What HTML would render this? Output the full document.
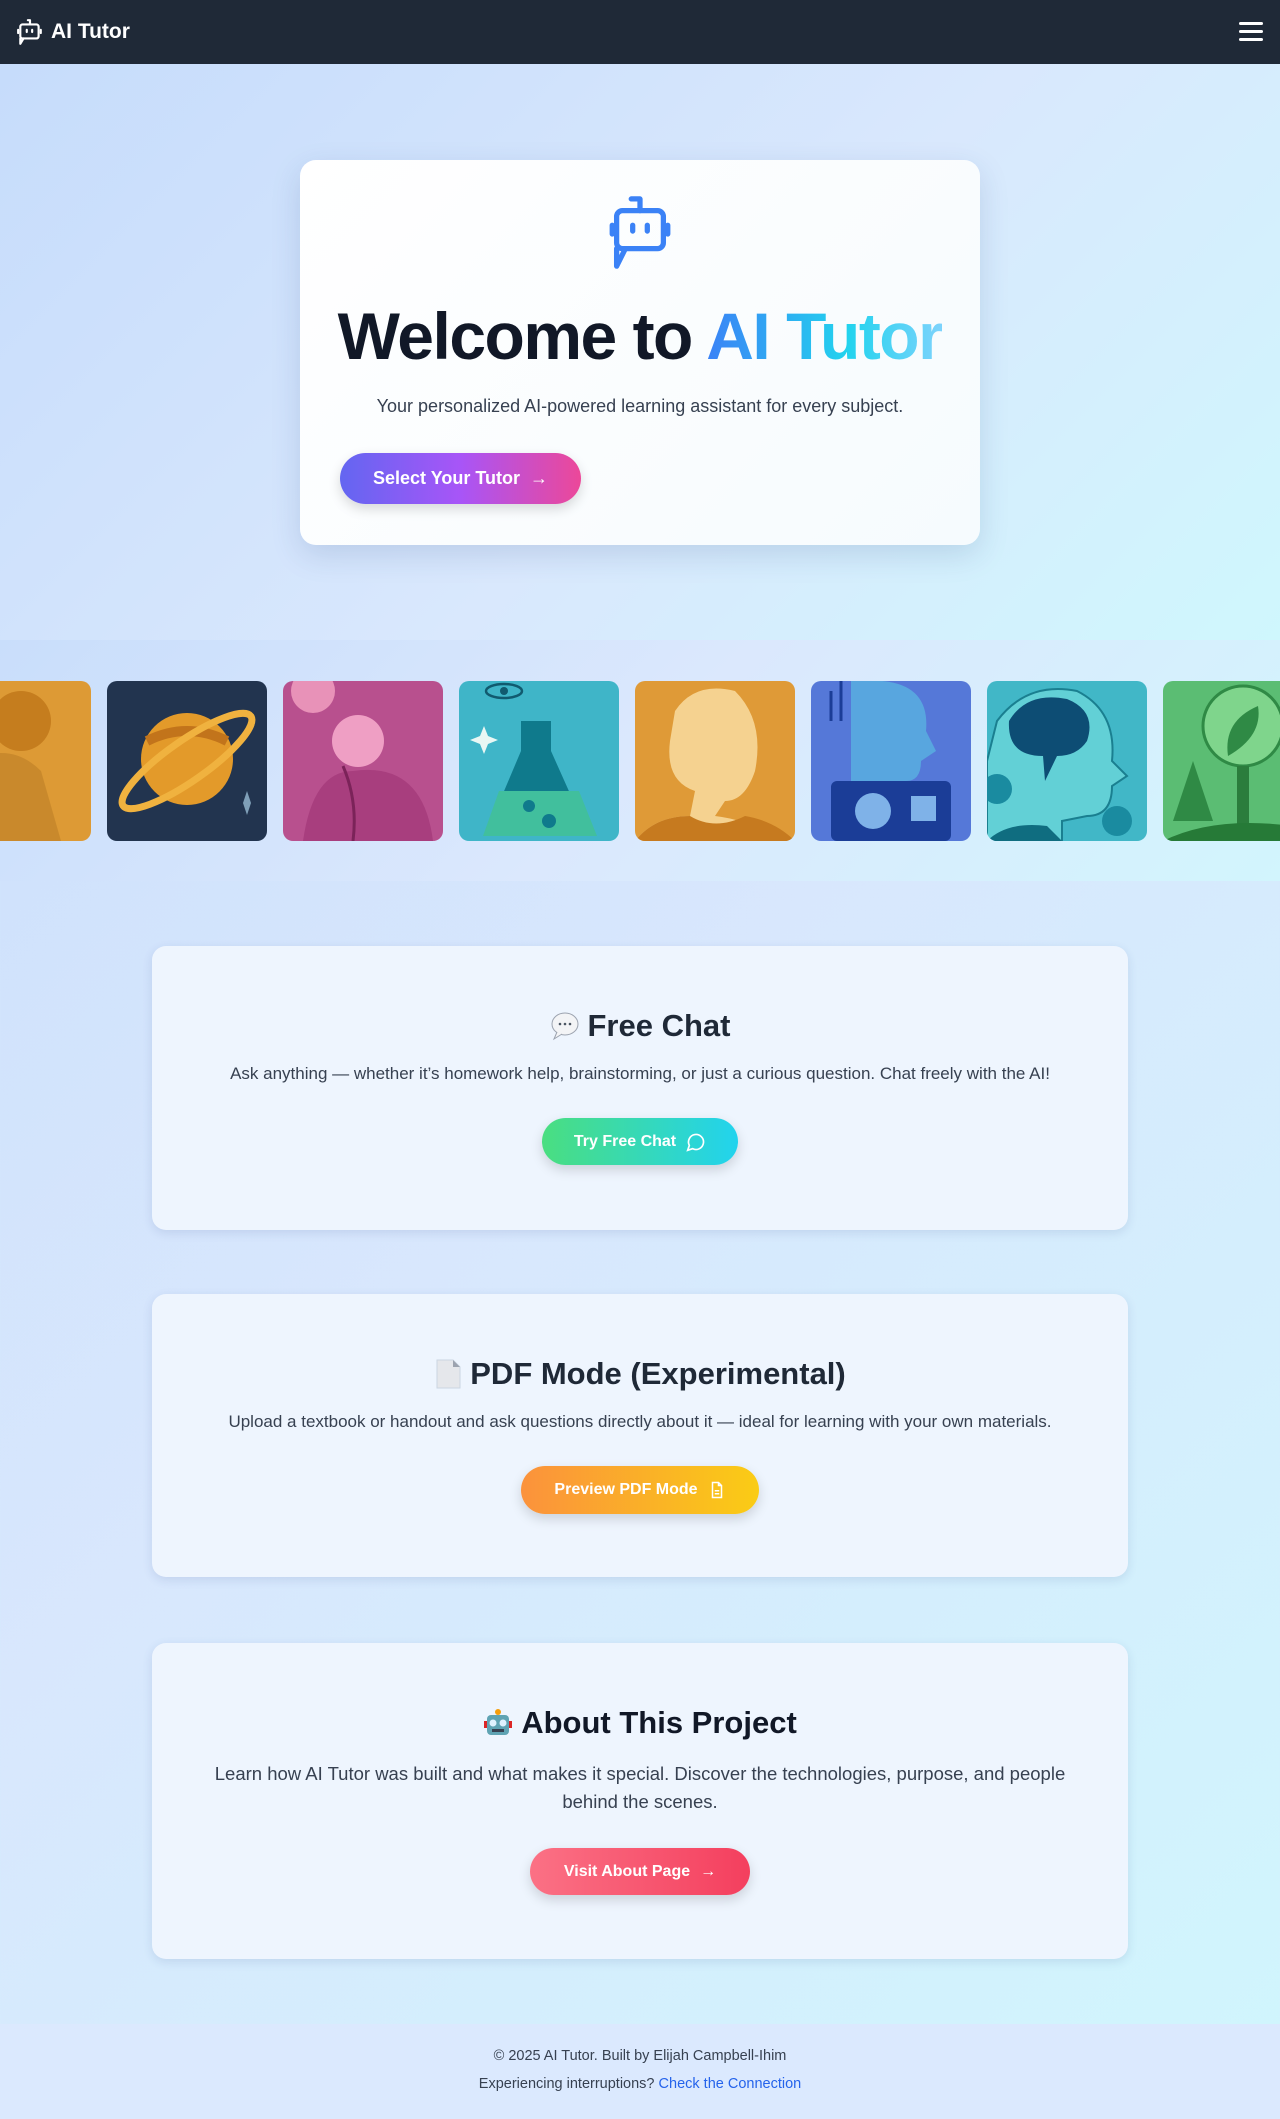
<!DOCTYPE html>
<html><head><meta charset="utf-8"><style>
*{box-sizing:border-box;margin:0;padding:0}
body{width:1280px;height:2119px;font-family:"Liberation Sans",sans-serif;background:linear-gradient(135deg,#c7ddfb,#d8e7fd 50%,#d0f6fd);position:relative;overflow:hidden;color:#1f2937}
nav{position:absolute;top:0;left:0;width:1280px;height:64px;background:#1f2937;box-shadow:0 2px 6px rgba(0,0,0,.2)}
nav .logo{position:absolute;left:17px;top:18px;display:flex;align-items:center;gap:8px;color:#fff;font-weight:700;font-size:21px}
nav .burger{position:absolute;right:17px;top:22px;width:24px}
nav .burger i{display:block;height:3px;background:#fff;margin-bottom:5px;border-radius:2px}
.hero{position:absolute;top:64px;left:0;width:1280px;height:576px;background:linear-gradient(135deg,#c6dcfb,#d9e8fd 55%,#cff7fd)}
.card{position:absolute;left:300px;top:96px;width:680px;height:385px;background:linear-gradient(135deg,#fff,#f6fbfe);border-radius:16px;box-shadow:0 10px 30px rgba(30,60,120,.15)}
.card h1{position:absolute;left:0;width:100%;top:138px;text-align:center;font-size:66px;font-weight:800;color:#111827;letter-spacing:-1.5px}
.card h1 span{background:linear-gradient(90deg,#3b82f6,#22d3ee 60%,#7dd3fc);-webkit-background-clip:text;color:transparent}
.card p{position:absolute;top:236px;width:100%;text-align:center;font-size:18px;color:#374151}
.btn{position:absolute;display:flex;align-items:center;justify-content:center;gap:10px;color:#fff;font-weight:700;border-radius:30px;box-shadow:0 5px 12px rgba(0,0,0,.15)}
.strip{position:absolute;top:640px;left:0;width:1280px;height:241px;background:linear-gradient(135deg,#c9defb,#dbe8fd 50%,#d2f5fd)}
.tile{position:absolute;top:41px;width:160px;height:160px;border-radius:10px;overflow:hidden}
.sec{position:absolute;left:152px;width:976px;background:#eef5fe;border-radius:14px;box-shadow:0 3px 10px rgba(30,60,120,.12);text-align:center}
.sec h2{position:absolute;width:100%;font-size:31px;font-weight:700;color:#1f2937;display:flex;justify-content:center;align-items:center;gap:8px}
.sec p{position:absolute;width:100%;font-size:17px;color:#374151}
footer{position:absolute;top:2024px;left:0;width:1280px;height:95px;background:#dbe9fe;text-align:center;font-size:14.5px;color:#374151}
</style></head><body>
<nav><div class="logo"><svg width="26" height="28" viewBox="0 0 24 26" fill="none" stroke="#fff" stroke-width="2" stroke-linecap="round" stroke-linejoin="round"><path d="M10 2h2v4"/><rect x="3" y="6" width="17" height="13" rx="2"/><path d="M3 19v5l3-5"/><path d="M1 11v3M22 11v3M9 11v2M14 11v2"/></svg>AI Tutor</div><div class="burger"><i></i><i></i><i></i></div></nav>
<div class="hero"><div class="card">
<svg style="position:absolute;left:302px;top:36px" width="76" height="76" viewBox="0 0 24 26" fill="none" stroke="#3b82f6" stroke-width="1.8" stroke-linecap="round" stroke-linejoin="round"><path d="M9 1h3v4"/><rect x="4" y="5" width="16" height="13" rx="2"/><path d="M4 18v6l3-6"/><path d="M2.5 10v3M21.5 10v3M9.5 10v2M14.5 10v2"/></svg>
<h1>Welcome to <span>AI Tutor</span></h1>
<p>Your personalized AI-powered learning assistant for every subject.</p>
<div class="btn" style="left:40px;top:293px;width:241px;height:51px;font-size:18px;background:linear-gradient(90deg,#6366f1,#a855f7 50%,#ec4899)">Select Your Tutor <span style="font-weight:400">→</span></div>
</div></div>
<div class="strip">
<div class="tile" style="left:-69px;background:#dd9a35"><svg width="160" height="160"><circle cx="90" cy="40" r="30" fill="#c57d1e"/><path d="M20 160 L40 80 Q80 60 110 90 L130 160Z" fill="#c9892c"/></svg></div>
<div class="tile" style="left:107px;background:#22344f"><svg width="160" height="160"><circle cx="80" cy="78" r="46" fill="#e39a2a"/><path d="M40 60 Q80 40 120 60" stroke="#c2741b" stroke-width="10" fill="none"/><ellipse cx="80" cy="80" rx="78" ry="20" transform="rotate(-35 80 80)" fill="none" stroke="#f0b23f" stroke-width="7"/><path d="M140 110 l4 12 l-4 12 l-4 -12z" fill="#7f9fb8"/></svg></div>
<div class="tile" style="left:283px;background:#b8508e"><svg width="160" height="160"><circle cx="30" cy="10" r="22" fill="#e892b8"/><circle cx="75" cy="60" r="26" fill="#ef9fc4"/><path d="M20 160 Q30 90 70 90 Q140 80 150 160Z" fill="#a83e7e"/><path d="M60 85 Q75 120 70 160" stroke="#7b2359" stroke-width="3" fill="none"/></svg></div>
<div class="tile" style="left:459px;background:#3fb5c8"><svg width="160" height="160"><path d="M62 40h30v30l38 85H26l36-85z" fill="#0f7a8c"/><path d="M40 110h80l18 45H24z" fill="#41bf9d"/><circle cx="70" cy="125" r="6" fill="#0f7a8c"/><circle cx="90" cy="140" r="7" fill="#0f7a8c"/><path d="M25 45 l4 10 l10 4 l-10 4 l-4 10 l-4 -10 l-10 -4 l10 -4z" fill="#e8f7f4"/><ellipse cx="45" cy="10" rx="18" ry="7" fill="none" stroke="#115a6f" stroke-width="2.5"/><circle cx="45" cy="10" r="4" fill="#115a6f"/></svg></div>
<div class="tile" style="left:635px;background:#df9a37"><svg width="160" height="160"><path d="M40 30 Q60 0 100 10 Q130 40 120 90 Q110 120 90 120 L80 135 Q120 140 140 160 H0 Q20 135 55 135 L60 110 Q30 100 35 60z" fill="#f5d290"/><path d="M0 160 Q20 135 55 135 Q80 150 110 135 Q140 140 160 160z" fill="#c67a1f"/></svg></div>
<div class="tile" style="left:811px;background:#5578d8"><svg width="160" height="160"><path d="M50 0 Q120 -5 115 50 L125 70 L110 80 Q110 100 95 100 V120 H40 V0z" fill="#58a6df"/><rect x="20" y="100" width="120" height="60" rx="6" fill="#1b3d97"/><circle cx="62" cy="130" r="18" fill="#7fb2e8"/><rect x="100" y="115" width="25" height="25" fill="#7fb2e8"/><path d="M20 10v30M30 0v40" stroke="#1b3d97" stroke-width="3"/></svg></div>
<div class="tile" style="left:987px;background:#41b7c7"><svg width="160" height="160"><path d="M10 40 Q40 0 90 10 Q130 30 125 80 L140 95 L125 105 Q125 135 100 135 L75 140 V160 H0 V80z" fill="#62d0d6" stroke="#1a7f90" stroke-width="2"/><path d="M22 40 Q40 10 80 18 Q110 30 100 60 Q90 75 70 75 L58 100 L56 75 Q20 75 22 40z" fill="#0d4d74"/><circle cx="10" cy="108" r="15" fill="#1a8ba0"/><circle cx="130" cy="140" r="15" fill="#1a8ba0"/><path d="M0 160 Q20 140 60 145 L75 160z" fill="#0f6d80"/></svg></div>
<div class="tile" style="left:1163px;background:#5bbd73"><svg width="160" height="160"><circle cx="80" cy="45" r="40" fill="#7fd58c" stroke="#2f8a45" stroke-width="3"/><path d="M65 75 Q60 40 95 25 Q100 55 65 75z" fill="#2f8a45"/><rect x="74" y="85" width="12" height="60" fill="#2b7d3c"/><path d="M30 80 L10 140 H50z" fill="#2f8a45"/><path d="M0 160 Q60 130 160 150 V160z" fill="#267a37"/></svg></div>
</div>

<div class="sec" style="top:946px;height:284px">
<h2 style="top:62px"><svg width="30" height="30" viewBox="0 0 30 30"><ellipse cx="15" cy="13" rx="13" ry="11" fill="#f3f4f6" stroke="#9ca3af"/><path d="M7 21 L4 28 L12 23" fill="#f3f4f6" stroke="#9ca3af"/><circle cx="10" cy="13" r="1.3" fill="#4b5563"/><circle cx="15" cy="13" r="1.3" fill="#4b5563"/><circle cx="20" cy="13" r="1.3" fill="#4b5563"/></svg>Free Chat</h2>
<p style="top:118px">Ask anything — whether it’s homework help, brainstorming, or just a curious question. Chat freely with the AI!</p>
<div class="btn" style="left:390px;top:172px;width:196px;height:47px;font-size:16px;background:linear-gradient(90deg,#4ade80,#22d3ee)">Try Free Chat <svg width="20" height="20" viewBox="0 0 24 24" fill="none" stroke="#fff" stroke-width="2"><path d="M7.9 20A9 9 0 1 0 4 16.1L2 22z"/></svg></div>
</div>

<div class="sec" style="top:1294px;height:283px">
<h2 style="top:62px"><svg width="28" height="30" viewBox="0 0 28 30"><path d="M3 1h16l7 7v21H3z" fill="#e5e7eb" stroke="#cbd5e1"/><path d="M19 1v7h7" fill="#9ca3af"/></svg>PDF Mode (Experimental)</h2>
<p style="top:118px">Upload a textbook or handout and ask questions directly about it — ideal for learning with your own materials.</p>
<div class="btn" style="left:369px;top:172px;width:238px;height:48px;font-size:16px;background:linear-gradient(90deg,#fb923c,#facc15)">Preview PDF Mode <svg width="18" height="18" viewBox="0 0 24 24" fill="none" stroke="#fff" stroke-width="2"><path d="M14 2H6v20h12V6z"/><path d="M14 2v4h4M9 13h6M9 17h6"/></svg></div>
</div>

<div class="sec" style="top:1643px;height:316px">
<h2 style="top:62px;font-weight:800;color:#111827"><svg width="30" height="30" viewBox="0 0 30 30"><rect x="4" y="7" width="22" height="20" rx="4" fill="#5fa3b3"/><circle cx="15" cy="4" r="3" fill="#f59e0b"/><circle cx="10" cy="15" r="3.5" fill="#e0f2fe"/><circle cx="20" cy="15" r="3.5" fill="#e0f2fe"/><rect x="9" y="21" width="12" height="3" fill="#374151"/><rect x="1" y="13" width="3" height="7" fill="#dc2626"/><rect x="26" y="13" width="3" height="7" fill="#dc2626"/></svg>About This Project</h2>
<p style="top:117px;font-size:18.5px;line-height:28px;padding:0 44px">Learn how AI Tutor was built and what makes it special. Discover the technologies, purpose, and people behind the scenes.</p>
<div class="btn" style="left:378px;top:205px;width:220px;height:47px;font-size:16px;background:linear-gradient(90deg,#fb7185,#f43f5e)">Visit About Page <span style="font-weight:400">→</span></div>
</div>

<footer><div style="position:absolute;top:24px;width:100%">© 2025 AI Tutor. Built by Elijah Campbell-Ihim</div><div style="position:absolute;top:52px;width:100%">Experiencing interruptions? <span style="color:#2563eb">Check the Connection</span></div></footer>
</body></html>
